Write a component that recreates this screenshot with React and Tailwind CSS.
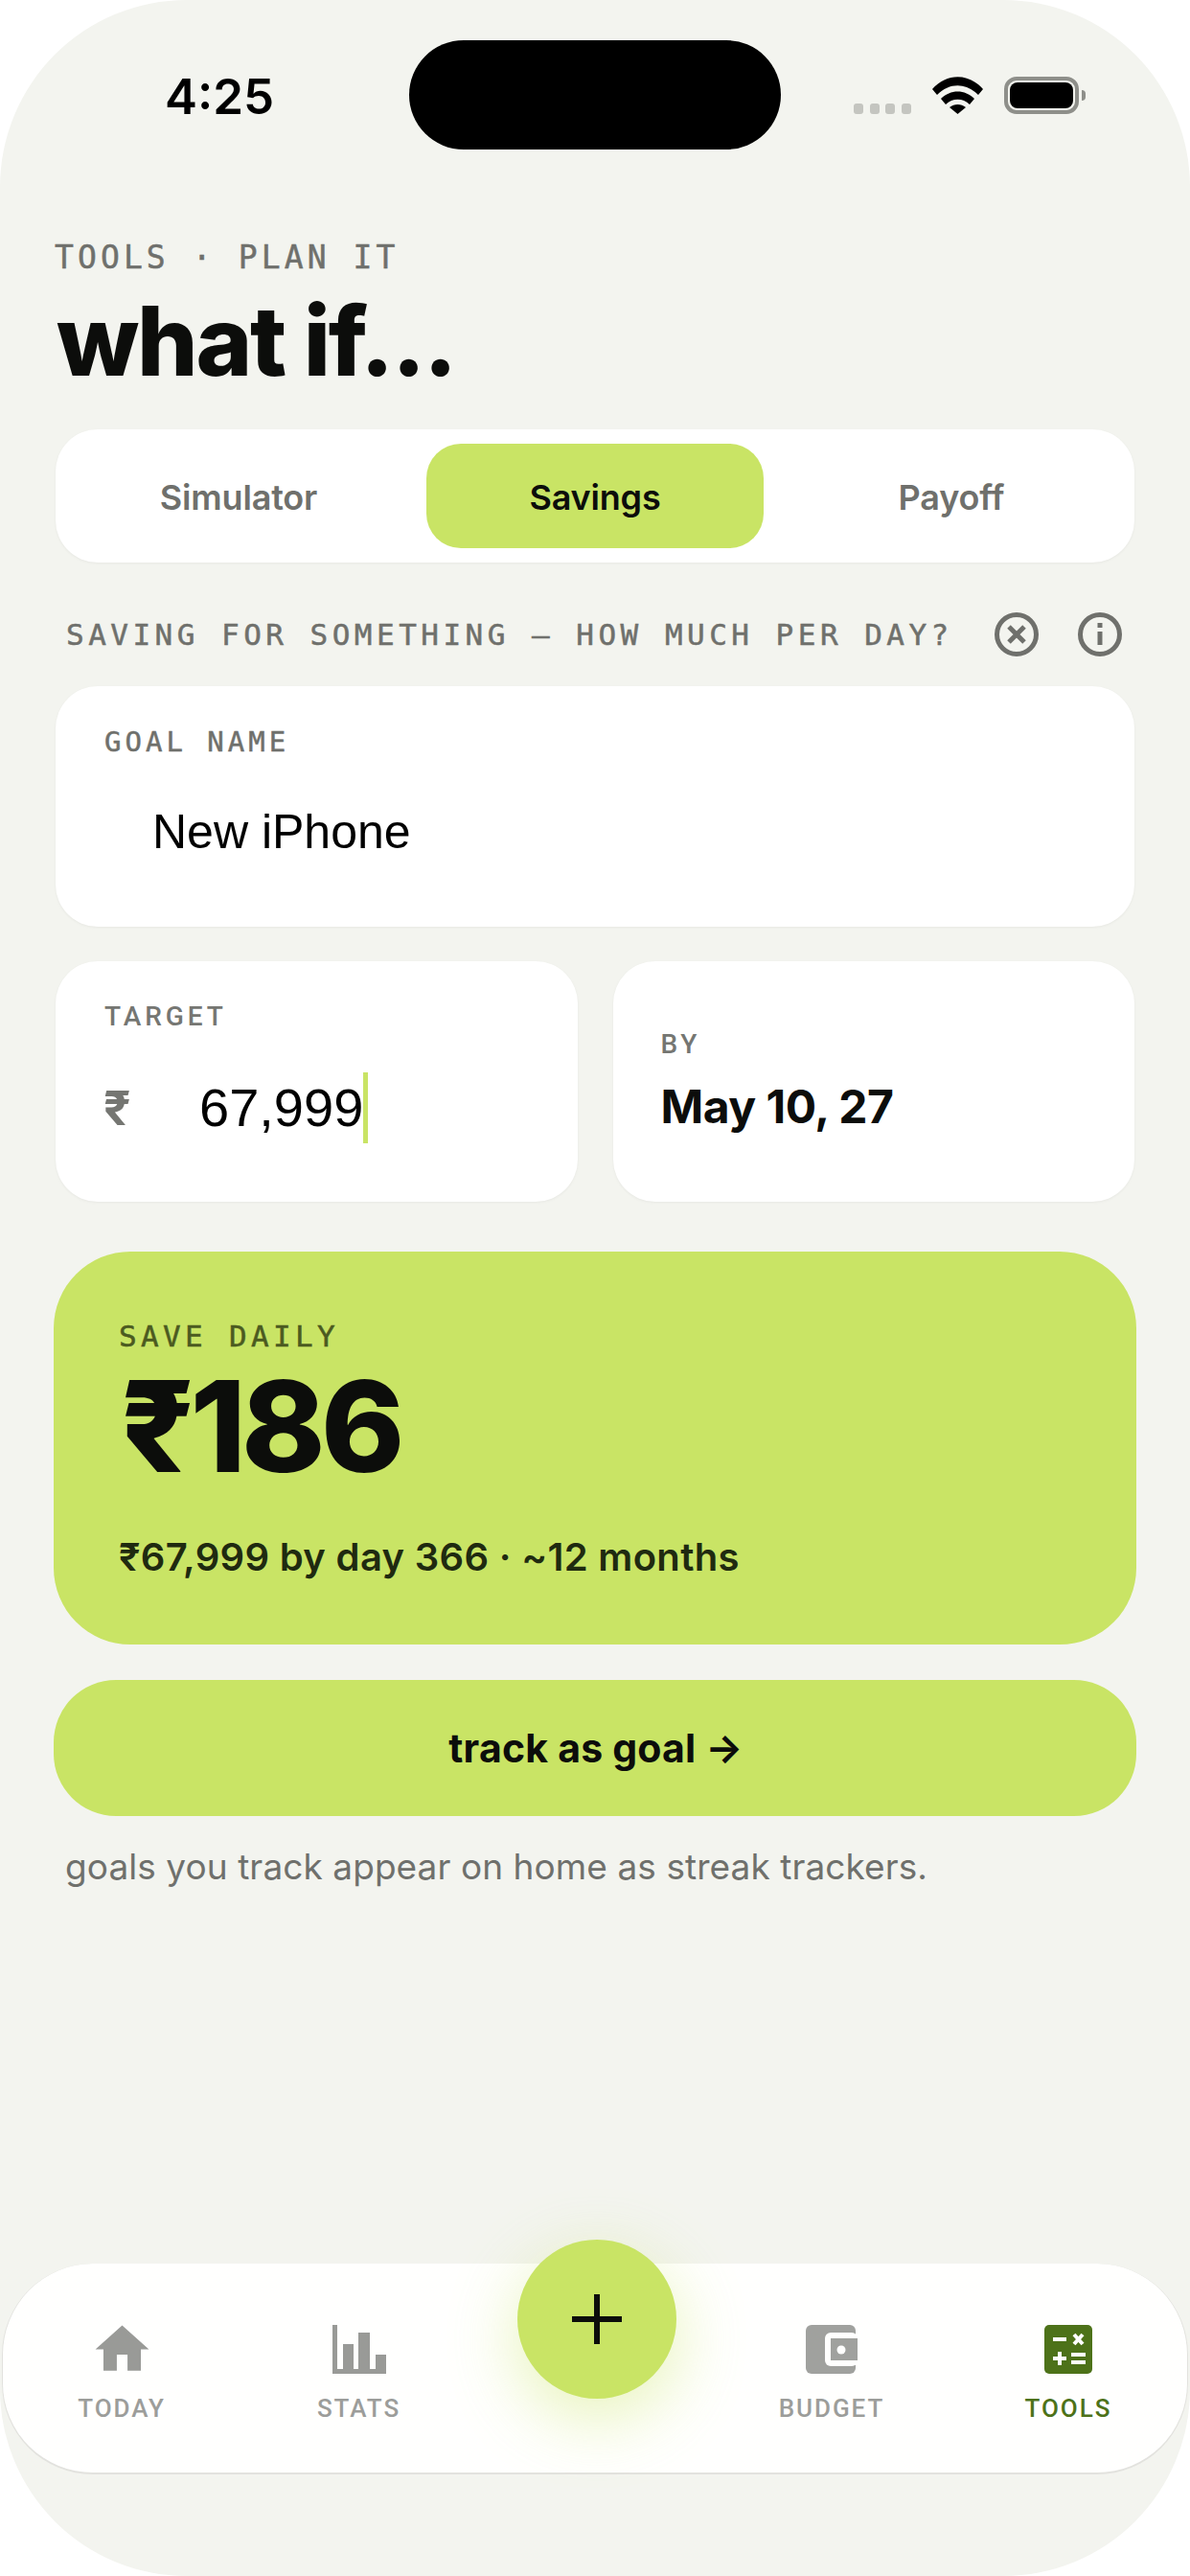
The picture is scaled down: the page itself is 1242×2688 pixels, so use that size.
import React from "react";

// mono labels sit a little heavier than the regular cut, so they get a thin stroke
const monoFont = "font-['DejaVu_Sans_Mono',monospace] [-webkit-text-stroke:0.5px]";
const fieldLabel = "font-[Roboto,sans-serif] font-medium text-[28px] leading-[28px] tracking-[0.14em] text-[#757672]";
const card = "rounded-[44px] bg-white shadow-[0_1px_3px_rgba(0,0,0,0.05)]";

const HomeIcon = () => (
	<svg width="67" height="67" viewBox="0 0 24 24" fill="#999a97" className="mt-[-8px] mb-[-8px]">
		<path d="M10 20v-6h4v6h5v-8h3L12 3 2 12h3v8z" />
	</svg>
);

const StatsIcon = () => (
	<svg width="56" height="51" viewBox="0 0 56 51" fill="#999a97">
		<path d="M0 0h5v46h6V20h11v26h5V8h12v38h6V31h11v20H0z" />
	</svg>
);

const WalletIcon = () => (
	<svg width="54" height="51" viewBox="0 0 54 51">
		<rect x="0" y="0" width="52" height="51" rx="6" fill="#a0a19e" />
		<rect x="20" y="8" width="34" height="35" rx="6" fill="#fffffe" />
		<rect x="26" y="14" width="28" height="23" fill="#a0a19e" />
		<circle cx="37" cy="26" r="4.5" fill="#fffffe" />
	</svg>
);

const CalcIcon = () => (
	<svg width="50" height="51" viewBox="0 0 50 51">
		<rect width="50" height="51" rx="5" fill="#4d7219" />
		<path
			d="M9 15h14M31 10l9 10M40 10l-9 10M9 35h14M16 28v14M28 31h15M28 39h15"
			stroke="#fff"
			strokeWidth="4"
			fill="none"
		/>
	</svg>
);

const navItems = [
	{ label: "TODAY", icon: <HomeIcon />, cx: "w-[248px]" },
	{ label: "STATS", icon: <StatsIcon />, cx: "w-[247px]" },
	{ spacer: true },
	{ label: "BUDGET", icon: <WalletIcon />, cx: "w-[246px]" },
	{ label: "TOOLS", icon: <CalcIcon />, cx: "w-[248px]", active: true },
];

const App = () => {
	return (
		<div className="w-[1242px] h-[2688px] bg-white overflow-hidden">
			<div className="h-full flex flex-col bg-[#f3f4ef] rounded-[195px] overflow-hidden font-[Inter,sans-serif]">
				{/* Status bar */}
				<div className="flex h-[156px] shrink-0">
					<div className="w-[427px] pl-[172px] pt-[70px] text-[51px] leading-[62px] font-semibold text-black">
						4:25
					</div>
					<div className="w-[388px] mt-[42px] h-[114px] rounded-[57px] bg-black" />
					<div className="w-[427px] pl-[76px] pt-[80px] flex items-end h-[119px]">
						<div className="flex gap-[6.5px] mr-[22px]">
							{[0, 1, 2, 3].map((i) => (
								<span key={i} className="w-[10px] h-[11px] rounded-[3px] bg-[#c4c5c0]" />
							))}
						</div>
						<svg width="53" height="39" viewBox="0 0 53 39" className="mr-[22px]">
							<path d="M0 13C15-4 38-4 53 13l-5 6C35 6 18 6 5 19z" />
							<path d="M9 23c10-10 25-10 35 0l-5 6c-7-7-18-7-25 0z" />
							<path d="M18 32c5-4 12-4 17 0l-8.500 7z" />
						</svg>
						<div className="relative w-[78px] h-[39px] rounded-[13px] border-[4px] border-[#8e8f8a] p-[2px]">
							<div className="w-full h-full rounded-[8px] bg-black" />
							<div className="absolute right-[-11px] top-[10px] w-[4px] h-[11px] rounded-r-[4px] bg-[#8e8f8a]" />
						</div>
					</div>
				</div>

				{/* Main content */}
				<div className="px-[58px]">
					<div className={monoFont + " mt-[93px] ml-[-1px] h-[40px] leading-[40px] text-[33px] tracking-[4.1px] text-[#6f706c] whitespace-nowrap"}>
						TOOLS · PLAN IT
					</div>
					<h1 className="mt-[10px] h-[113px] ml-[1px] text-[100px] leading-[113px] font-extrabold tracking-[-0.022em] text-[#0c0d0b]">
						what if...
					</h1>

					{/* Mode tabs */}
					<div className={card + " mt-[36px] h-[139px] p-[15px] grid grid-cols-3 gap-[20px]"}>
						{["Simulator", "Savings", "Payoff"].map((tab) => (
							<button
								key={tab}
								className={
									tab === "Savings"
										? "rounded-[36px] bg-[#c9e465] pt-[2px] text-[36px] font-semibold text-[#0c0d0b] tracking-[-0.005em]"
										: "rounded-[36px] pt-[2px] text-[36px] font-semibold text-[#6f706c] tracking-[-0.005em]"
								}
							>
								{tab}
							</button>
						))}
					</div>

					<div className="mt-[52px] h-[46px] flex items-center pl-[11px]">
						<span className={monoFont + " text-[31px] tracking-[4.48px] text-[#6f706c] whitespace-nowrap"}>
							SAVING FOR SOMETHING — HOW MUCH PER DAY?
						</span>
						<div className="ml-auto mr-[13px] flex gap-[41px]">
							<svg width="46" height="46" viewBox="0 0 46 46" fill="none" stroke="#6f706c" strokeWidth="5">
								<circle cx="23" cy="23" r="20.500" />
								<path d="M15 15l16 16M31 15L15 31" />
							</svg>
							<svg width="46" height="46" viewBox="0 0 46 46" fill="none" stroke="#6f706c" strokeWidth="5">
								<circle cx="23" cy="23" r="20.500" />
								<path d="M23 20v14M23 11v5" />
							</svg>
						</div>
					</div>

					{/* Goal name */}
					<div className={card + " mt-[31px] h-[251px] pl-[51px] pt-[44px]"}>
						<div className={monoFont + " text-[29px] leading-[28px] tracking-[4px] text-[#6f706c]"}>GOAL NAME</div>
						<div className="mt-[50px] ml-[50px] h-[60px] font-['Liberation_Sans',sans-serif] text-[50px] leading-[60px] text-black">
							New iPhone
						</div>
					</div>

					<div className="mt-[36px] grid grid-cols-2 gap-[37px]">
						{/* Target amount */}
						<div className={card + " h-[251px] pl-[51px] pt-[44px]"}>
							<div className={fieldLabel}>TARGET</div>
							<div className="mt-[44px] h-[74px] flex items-center">
								<span className="w-[99px] ml-[-1px] mr-[1px] text-[50px] leading-[60px] font-bold text-[#757672]">₹</span>
								<span className="h-[74px] border-r-[5px] border-[#c9e465] font-['Liberation_Sans',sans-serif] text-[56px] leading-[74px] text-black">
									67,999
								</span>
							</div>
						</div>
						{/* Target date */}
						<div className={card + " h-[251px] pl-[50px] flex flex-col justify-center gap-[23px]"}>
							<div className={fieldLabel + " mt-[2px]"}>BY</div>
							<div className="text-[48px] leading-[56px] font-bold tracking-[-0.01em] text-[#0c0d0b]">
								May 10, 27
							</div>
						</div>
					</div>

					{/* Daily result */}
					<div className="mt-[52px] mx-[-2px] h-[410px] rounded-[80px] bg-[#c9e465] pl-[68px] pt-[74px]">
						<div className={monoFont + " text-[31px] leading-[28px] tracking-[4.35px] text-[#4b5a20]"}>
							SAVE DAILY
						</div>
						<div className="mt-[14px] ml-[2px] text-[132px] leading-[132px] font-extrabold tracking-[-0.035em] text-[#0c0d0b]">
							₹186
						</div>
						<div className="mt-[46px] text-[40px] leading-[50px] font-semibold tracking-[0.008em] text-[#1f2a10]">
							₹67,999 by day 366 · ~12 months
						</div>
					</div>

					<button className="mt-[37px] mx-[-2px] w-[1130px] h-[142px] pt-[2px] pl-[2px] rounded-[65px] bg-[#c9e465] text-[41px] font-bold tracking-[0.005em] text-[#0c0d0b]">
						track as goal →
					</button>

					<p className="mt-[28px] pl-[10px] text-[37px] leading-[50px] tracking-[0.002em] text-[#6f706c]">
						goals you track appear on home as streak trackers.
					</p>
				</div>

				{/* Bottom navigation */}
				<div className="relative mt-auto mb-[106px] mx-[2px] h-[220px] rounded-[95px] bg-[#fffffe] border-b-[2px] border-x-[1px] border-[#e2e2de] flex pt-[64px]">
					{navItems.map((item, i) =>
						item.spacer ? (
							<div key={i} className="w-[247px]" />
						) : (
							<div key={item.label} className={item.cx + " flex flex-col items-center"}>
								<div className="h-[51px] flex items-center">{item.icon}</div>
								<span
									className={
										item.active
											? "mt-[22px] font-[Roboto,sans-serif] font-medium text-[26px] leading-[28px] tracking-[0.075em] text-[#4d7219]"
											: "mt-[22px] font-[Roboto,sans-serif] font-medium text-[26px] leading-[28px] tracking-[0.075em] text-[#9c9d9a]"
									}
								>
									{item.label}
								</span>
							</div>
						)
					)}
					<button className="absolute left-[537px] top-[-25px] w-[166px] h-[166px] rounded-full bg-[#c9e465] shadow-[0_20px_70px_rgba(201,228,101,0.45)] flex items-center justify-center">
						<svg width="52" height="52" viewBox="0 0 52 52" stroke="#0c0d0b" strokeWidth="6">
							<path d="M0 26h52M26 0v52" />
						</svg>
					</button>
				</div>
			</div>
		</div>
	);
};

export default App;
